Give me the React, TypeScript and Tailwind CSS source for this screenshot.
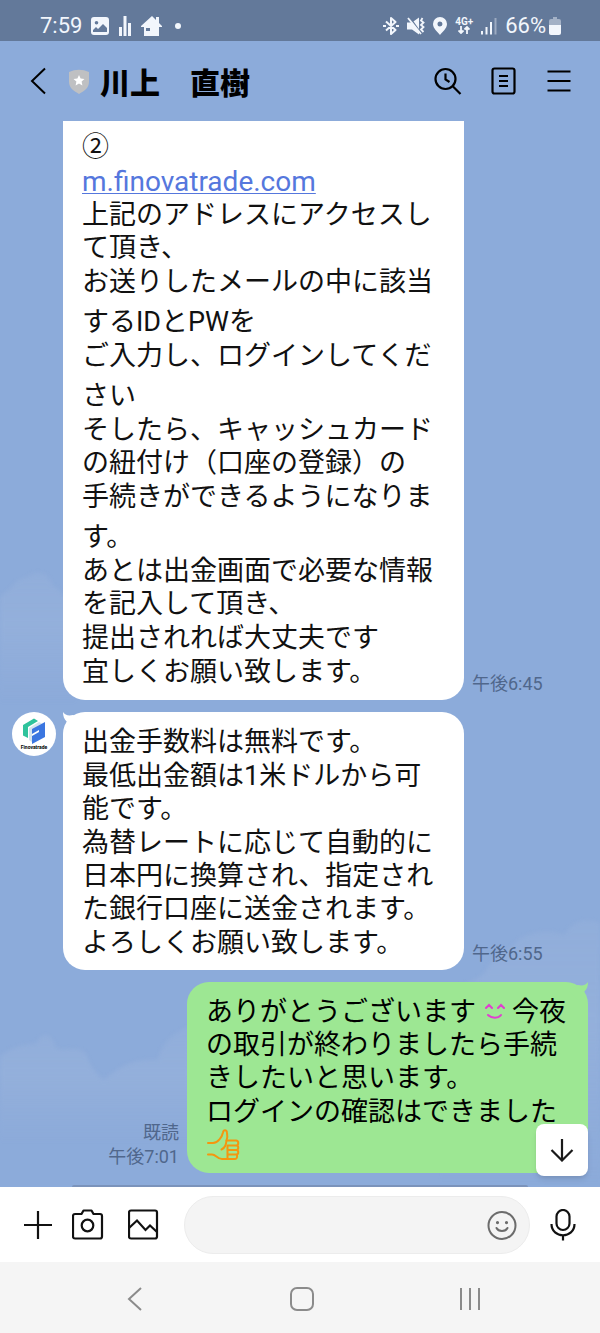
import React from 'react';

interface Line {
    text: React.ReactNode;
    tall?: boolean;
}

const ADDRESS_MESSAGE: Line[][] = [
    [{ text: '②' }],
    [{ text: <a href="#" className="text-[28px] text-[#5577dd] underline underline-offset-2 decoration-1">m.finovatrade.com</a> }],
    [{ text: '上記のアドレスにアクセスし' }, { text: 'て頂き、' }],
    [{ text: 'お送りしたメールの中に該当' }, { text: 'するIDとPWを', tall: true }],
    [{ text: 'ご入力し、ログインしてくだ' }, { text: 'さい', tall: true }],
    [{ text: 'そしたら、キャッシュカード' }, { text: 'の紐付け（口座の登録）の' }],
    [{ text: '手続きができるようになりま' }, { text: 'す。', tall: true }],
    [{ text: 'あとは出金画面で必要な情報' }, { text: 'を記入して頂き、' }],
    [{ text: '提出されれば大丈夫です' }],
    [{ text: '宜しくお願い致します。' }],
];

const FEE_MESSAGE: Line[][] = [
    [{ text: '出金手数料は無料です。' }],
    [{ text: '最低出金額は1米ドルから可' }, { text: '能です。' }],
    [{ text: '為替レートに応じて自動的に' }, { text: '日本円に換算され、指定され' }, { text: 'た銀行口座に送金されます。' }],
    [{ text: 'よろしくお願い致します。' }],
];

const REPLY_MESSAGE: Line[][] = [
    [
        { text: <>ありがとうございます<SmileEmoji />今夜</> },
        { text: 'の取引が終わりましたら手続' },
        { text: 'きしたいと思います。' },
    ],
    [{ text: 'ログインの確認はできました' }, { text: <ThumbEmoji /> }],
];

function SmileEmoji() {
    return (
        <svg role="img" aria-label="笑顔" viewBox="0 0 36 30" className="inline-block h-[30px] w-9 align-[-6px]" fill="none" stroke="#e03fd0" strokeWidth="2" strokeLinecap="round">
            <path d="M10 11 13 8l3 3M22 11l3-3 3 3M12 18c3.5 3.5 10.5 3.5 13 0" />
        </svg>
    );
}

function ThumbEmoji() {
    return (
        <svg role="img" aria-label="いいね" viewBox="0 0 34 32" className="inline-block h-8 w-[34px] align-[-7px]" fill="none" stroke="#f5960f" strokeWidth="2" strokeLinecap="round" strokeLinejoin="round">
            <path d="M2 14h5c5 0 9-6 10-10.500 .5-3 3.500-3 4 0 .6 3 .5 5-.5 8-.5 4-1 7-5 9" />
            <path d="M2 25.500h4c4 0 5 4.500 10 4.500h12.500c2 0 3-1.500 2.500-4" />
            <path d="M20.500 11.500h9.500c3 0 3 5 0 5h-8.500v9M21.500 16.500h8.500c3 0 3 4.500 0 4.500h-8.500M21.500 21h8.500c3 0 3 4.500 0 4.500h-8.500V30" />
        </svg>
    );
}

function StatusBar() {
    return (
        <div className="flex h-[41px] shrink-0 items-center justify-between bg-[#63799a] pt-2.5 pr-[39px] pl-10 text-[22px] leading-6 text-[#f2f6fc]">
            <div className="flex items-center gap-[9px]">
                <span>7:59</span>
                <svg viewBox="0 0 18 18" className="size-[18px]">
                    <path fill="currentColor" fillRule="evenodd" d="M3 0h12a3 3 0 0 1 3 3v12a3 3 0 0 1-3 3H3a3 3 0 0 1-3-3V3a3 3 0 0 1 3-3Zm2.500 4a1.800 1.800 0 1 0 0 3.600 1.800 1.800 0 0 0 0-3.600ZM2 15h14v-4l-4-4-5 5-2-2-3 3v2Z" />
                </svg>
                <svg viewBox="0 0 14 20" className="h-5 w-3.5" fill="currentColor">
                    <path d="M1 11h3v9H1zM5.500 0h3v20h-3zM10 7h3v13h-3z" />
                </svg>
                <svg viewBox="0 0 21 20" className="h-5 w-[21px]" fill="currentColor">
                    <path fillRule="evenodd" d="M11 0 0 10v1h3v9h15v-9h3v-1l-3-3V1h-3v3l-4-4ZM5 12h4v3H5z" />
                </svg>
                <span className="ml-1 size-1.5 rounded-full bg-current" />
            </div>
            <div className="flex items-center gap-2">
                <svg viewBox="0 0 16 18" className="h-[18px] w-4" fill="none" stroke="currentColor" strokeWidth="2" strokeLinejoin="round">
                    <path d="m3 4.500 9.500 8.500-4.500 4V1l4.500 4L3 13.500M0 9h3M13 9h3" />
                </svg>
                <svg viewBox="0 0 18 18" className="size-[18px]">
                    <path fill="currentColor" d="M0 5.500h5L12 .5v17l-7-5H0z" />
                    <path d="m2.500 0 12 17" stroke="#63799a" strokeWidth="1.500" />
                    <path d="m1 1 13 16" stroke="currentColor" strokeWidth="1.800" />
                    <path d="m15.500 1-1.500 2.500 2.500 2-2.500 2.500 2.500 2-2.500 2.500 2.500 2.500" fill="none" stroke="currentColor" strokeWidth="1.800" />
                </svg>
                <svg viewBox="0 0 14 18" className="h-[18px] w-3.5" fill="currentColor">
                    <path fillRule="evenodd" d="M7 0a7 7 0 0 1 7 7c0 4.500-4.500 7.500-7 11-2.500-3.500-7-6.500-7-11a7 7 0 0 1 7-7Zm0 4.500a2.500 2.500 0 1 0 0 5 2.500 2.500 0 0 0 0-5Z" />
                </svg>
                <span className="flex flex-col items-center text-[10px] leading-[9px] font-bold">
                    4G+
                    <svg viewBox="0 0 12 8" className="h-2 w-3" fill="none" stroke="currentColor" strokeWidth="1.800">
                        <path d="M3 0v7M.5 4.500 3 7l2.500-2.500M9 8V1M6.500 3.500 9 1l2.500 2.500" />
                    </svg>
                </span>
                <svg viewBox="0 0 16 18" className="h-[18px] w-4" fill="currentColor">
                    <path d="M0 14h2v3.500H0zM4.500 10h2v7.500h-2zM9 5h2v12.500H9z" />
                    <path opacity=".4" d="M13.500 1h2v16.500h-2z" />
                </svg>
                <span className="flex items-center gap-[3px]">
                    66%
                    <svg viewBox="0 0 12 18" className="h-[18px] w-3" fill="currentColor">
                        <path opacity=".45" d="M4 0h4v2h2a2 2 0 0 1 2 2v4H0V4a2 2 0 0 1 2-2h2z" />
                        <path d="M0 8h12v8a2 2 0 0 1-2 2H2a2 2 0 0 1-2-2z" />
                    </svg>
                </span>
            </div>
        </div>
    );
}

function ChatHeader() {
    return (
        <header className="flex h-20 shrink-0 items-center justify-between pr-[27px] pl-[30px]">
            <div className="flex items-center">
                <button aria-label="戻る" className="mr-[22px]">
                    <svg viewBox="0 0 16 28" className="h-7 w-4" fill="none" stroke="black" strokeWidth="2">
                        <path d="M15 1.500 2 14l13 12.500" />
                    </svg>
                </button>
                <svg viewBox="0 0 22 25" className="mr-2.5 h-[25px] w-[22px]">
                    <path fill="#bfc0c2" d="M1 3Q11-1.500 21 3V13c0 6-5 9-10 12C6 22 1 19 1 13Z" />
                    <path fill="white" d="m11 6 1.600 3.600 3.900.4-2.900 2.600.8 3.900-3.400-2-3.400 2 .8-3.900L5.500 10l3.900-.4z" />
                </svg>
                <h1 className="pt-1.5 text-[30px] leading-9 font-black text-black">川上　直樹</h1>
            </div>
            <div className="flex items-center gap-[29px]">
                <button aria-label="検索">
                    <svg viewBox="0 0 28 28" className="size-7" fill="none" stroke="black" strokeWidth="2.200">
                        <circle cx="11.500" cy="12" r="10" />
                        <path d="m18.500 19 8 8M11.500 6.500v6l4 2.500" />
                    </svg>
                </button>
                <button aria-label="ノート">
                    <svg viewBox="0 0 25 28" className="h-7 w-[25px]" fill="none" stroke="black" strokeWidth="2.200">
                        <rect x="1.500" y="1.500" width="22" height="25" rx="2" />
                        <path d="M8 9h9M8 14h9M8 19h9" />
                    </svg>
                </button>
                <button aria-label="メニュー">
                    <svg viewBox="0 0 28 28" className="size-7" stroke="black" strokeWidth="2.200">
                        <path d="M2.500 4.500h23M2.500 14h23M2.500 23.500h23" />
                    </svg>
                </button>
            </div>
        </header>
    );
}

function MessageText({ paragraphs }: { paragraphs: Line[][] }) {
    return (
        <div className="flex flex-col gap-px text-[27px] leading-[33px] whitespace-nowrap">
            {paragraphs.map((lines, i) => (
                <p key={i}>
                    {lines.map((line, j) => (
                        <span key={j} className={line.tall ? 'block h-10 pt-[7px]' : 'block h-[33px]'}>
                            {line.text}
                        </span>
                    ))}
                </p>
            ))}
        </div>
    );
}

function Avatar() {
    return (
        <div className="flex size-11 shrink-0 flex-col items-center rounded-full bg-white pt-1.5">
            <svg viewBox="0 0 24 26" className="h-[26px] w-6">
                <path fill="#2fc39c" d="M1 7 12 .5l4 2.500-10 6v11l-5-2.500z" />
                <path fill="#d5e4ee" d="m7 10 10-6 3 1.500-10 6.500v12l-3-2z" />
                <path fill="#3b76e0" d="m10 11 13-7v15L10 26v-8l7-4v-2l-7 4z" />
            </svg>
            <span className="text-[5px] leading-[6px] font-bold text-black">Finovatrade</span>
        </div>
    );
}

function Time({ children }: { children: React.ReactNode }) {
    return <div className="mb-1 self-end text-right text-lg leading-6 whitespace-nowrap text-[#50678c]">{children}</div>;
}

function Clouds() {
    return (
        <svg viewBox="0 0 600 1066" preserveAspectRatio="none" className="absolute inset-0 h-full w-full blur-[2px]">
            <defs>
                <linearGradient id="cloudFade" x1="0" y1="0" x2="0" y2="1">
                    <stop offset="0%" stopColor="#b4c5e2" stopOpacity="0.14" />
                    <stop offset="40%" stopColor="#b4c5e2" stopOpacity="0.2" />
                    <stop offset="100%" stopColor="#b4c5e2" stopOpacity="0" />
                </linearGradient>
            </defs>
            <g fill="url(#cloudFade)">
                <path d="M0 475c12-5 14-18 28-19 8-8 22-4 24 8 12 6 16 20 24 30v90H0z" />
                <path d="M440 870c20-4 30-8 45-18 6-18 24-20 34-34 14-8 32-10 46-4 6-14 22-18 35-12v264H440z" />
                <path d="M0 935c12-8 20-12 36-12 6-14 16-12 20 4 12 4 20-4 30 6 4 12 10 20 18 26 14-12 28-22 54-20 4-16 12-26 32-34v120H0z" />
            </g>
        </svg>
    );
}

function ChatRoom() {
    return (
        <main className="relative flex flex-1 flex-col overflow-hidden">
            <Clouds />
            <div className="relative flex flex-1 flex-col gap-3 px-3">
                <div className="flex gap-2 pl-[51px]">
                    <div className="w-full max-w-[401px] rounded-b-[22px] bg-white px-[19px] pt-2.5 pb-[11px]">
                        <MessageText paragraphs={ADDRESS_MESSAGE} />
                    </div>
                    <Time>午後6:45</Time>
                </div>
                <div className="flex gap-2">
                    <div className="-mr-px shrink-0">
                        <Avatar />
                    </div>
                    <div className="relative w-full max-w-[401px] rounded-[22px] bg-white px-[19px] pt-3.5 pb-2.5">
                        <svg viewBox="0 0 24 24" className="absolute top-0 left-0 size-6" fill="white">
                            <path d="M0 0C2 3 5 4 10 3L20 8 8 20 2 14 4 10C1 7 0 4 0 0Z" />
                        </svg>
                        <div className="relative">
                            <MessageText paragraphs={FEE_MESSAGE} />
                        </div>
                    </div>
                    <Time>午後6:55</Time>
                </div>
                <div className="flex justify-end gap-2">
                    <Time>
                        既読
                        <br />
                        午後7:01
                    </Time>
                    <div className="relative w-full max-w-[401px] rounded-[22px] bg-[#9de793] px-[19px] pt-3.5 pb-[11px] text-black">
                        <svg viewBox="0 0 24 24" className="absolute top-0 right-0 size-6" fill="#9de793">
                            <path d="M24 0C22 3 19 4 14 3L4 8l12 12 6-6-2-4C23 7 24 4 24 0Z" />
                        </svg>
                        <div className="relative">
                            <MessageText paragraphs={REPLY_MESSAGE} />
                        </div>
                    </div>
                </div>
                <div className="mt-auto mr-[60px] ml-[60px] h-0.5 rounded-t-full bg-[#7b93bb]" />
            </div>
            <button aria-label="最新のメッセージへ" className="absolute right-3 bottom-[11px] flex size-[52px] items-center justify-center rounded-lg bg-white shadow-md">
                <svg viewBox="0 0 24 24" className="size-6" fill="none" stroke="#1a1a1a" strokeWidth="2.200">
                    <path d="M12 1v21M1.500 12 12 22.500 22.500 12" />
                </svg>
            </button>
        </main>
    );
}

function InputBar() {
    return (
        <form className="flex h-[75px] shrink-0 items-center bg-white pr-6 pl-6 text-[#111]">
            <button type="button" aria-label="追加" className="mr-5">
                <svg viewBox="0 0 28 28" className="size-7" stroke="currentColor" strokeWidth="2.200">
                    <path d="M14 0v28M0 14h28" />
                </svg>
            </button>
            <button type="button" aria-label="カメラ" className="mr-6">
                <svg viewBox="0 0 32 32" className="size-8" fill="none" stroke="currentColor" strokeWidth="2.200" strokeLinejoin="round">
                    <path d="M3 5h6.500l2-3.500h8l2 3.500H28a2 2 0 0 1 2 2v20.500a2 2 0 0 1-2 2H3a2 2 0 0 1-2-2V7a2 2 0 0 1 2-2Z" />
                    <circle cx="15.500" cy="16.500" r="5.800" />
                </svg>
            </button>
            <button type="button" aria-label="写真" className="mr-6">
                <svg viewBox="0 0 32 32" className="size-8" fill="none" stroke="currentColor" strokeWidth="2.200">
                    <rect x="1" y="1.500" width="28" height="28" rx="2" />
                    <path d="m1 19 8-7.500 8.500 9.500 4.500-4.500 7 6.500" />
                </svg>
            </button>
            <div className="flex h-[58px] flex-1 items-center rounded-full border border-[#ececec] bg-[#f4f4f4] pr-3 pl-5">
                <input type="text" aria-label="メッセージを入力" className="min-w-0 flex-1 bg-transparent text-[22px] outline-none" />
                <button type="button" aria-label="スタンプ">
                    <svg viewBox="0 0 30 30" className="size-[30px]" fill="none" stroke="#6c6c6c" strokeWidth="2" strokeLinecap="round">
                        <circle cx="15" cy="15.500" r="13.500" />
                        <path d="M9.500 18c2 4 9 4 11 0" />
                        <path d="M10.500 12.500v.1M19.500 12.500v.1" strokeWidth="3.200" />
                    </svg>
                </button>
            </div>
            <button type="button" aria-label="音声" className="ml-5">
                <svg viewBox="0 0 26 32" className="h-8 w-[26px]" fill="none" stroke="currentColor" strokeWidth="2.200">
                    <rect x="6.500" y="1" width="13" height="20" rx="6.500" />
                    <path d="M1.500 15c0 15 23 15 23 0M13 26v5.500" />
                </svg>
            </button>
        </form>
    );
}

function NavBar() {
    return (
        <nav className="flex h-[71px] shrink-0 items-center justify-around bg-[#f5f5f5] pt-0.5 pr-[46px] pl-[51px] text-[#8b8b8b]">
            <button aria-label="戻る">
                <svg viewBox="0 0 24 24" className="size-6" fill="none" stroke="currentColor" strokeWidth="2">
                    <path d="M18 1 6 12l12 11" />
                </svg>
            </button>
            <button aria-label="ホーム">
                <svg viewBox="0 0 24 24" className="size-6" fill="none" stroke="currentColor" strokeWidth="2">
                    <rect x="1" y="1" width="22" height="22" rx="6" />
                </svg>
            </button>
            <button aria-label="履歴">
                <svg viewBox="0 0 24 24" className="size-6" stroke="currentColor" strokeWidth="2">
                    <path d="M3 1v22M12 1v22M21 1v22" />
                </svg>
            </button>
        </nav>
    );
}

export default function App() {
    return (
        <div lang="ja" className="flex min-h-screen flex-col bg-[#8cabda] font-['Roboto','Noto_Sans_CJK_JP',sans-serif] text-[#111]">
            <StatusBar />
            <ChatHeader />
            <ChatRoom />
            <InputBar />
            <NavBar />
        </div>
    );
}
